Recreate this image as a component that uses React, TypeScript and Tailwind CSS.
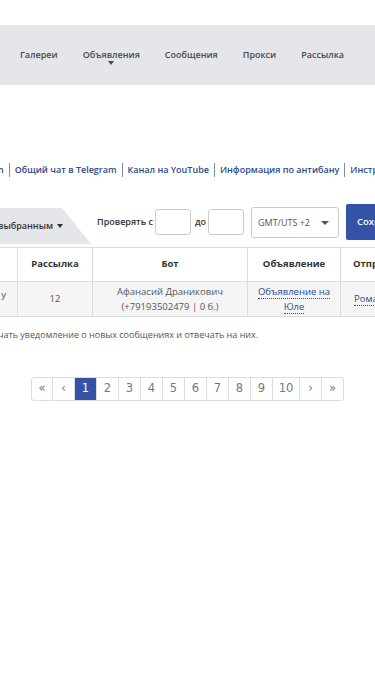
import React from 'react';

const navItems = ['Галереи', 'Объявления', 'Сообщения', 'Прокси', 'Рассылка'];
const links = ['Общий чат в Telegram', 'Канал на YouTube', 'Информация по антибану', 'Инструкция'];
const pages = ['«', '‹', '1', '2', '3', '4', '5', '6', '7', '8', '9', '10', '›', '»'];

const App: React.FC = () => {
  return (
    <div className="relative h-[700px] w-[375px] overflow-hidden bg-white font-['Open_Sans',sans-serif]">
      <div className="h-[25px]" />

      {/* top menu */}
      <nav className="flex h-[60px] items-center gap-[25px] bg-[#e5e6e9] pl-[20px] text-[9px] font-semibold text-[#4b4b4b]">
        {navItems.map((item) => (
          <div key={item} className="relative whitespace-nowrap">
            {item}
            {item === 'Объявления' && (
              <span className="absolute left-1/2 top-[13px] -translate-x-1/2 border-x-[3.5px] border-t-[4px] border-x-transparent border-t-[#4b4b4b]" />
            )}
          </div>
        ))}
      </nav>

      {/* useful links */}
      <div className="mt-[77px] flex h-[16px] items-center whitespace-nowrap text-[9px] font-semibold text-[#2d4a8a]">
        <span className="-ml-[2px]">n</span>
        {links.map((l) => (
          <React.Fragment key={l}>
            <span className="mx-[5px] h-[14px] border-l border-[#7f8aa8]" />
            <span>{l}</span>
          </React.Fragment>
        ))}
      </div>

      {/* filter row */}
      <div className="mt-[26px] flex h-[36px] items-start whitespace-nowrap">
        <div className="mt-[4px] flex h-[36px] w-[91px] shrink-0 items-center bg-[#e5e6e9] text-[9px] font-semibold text-[#333] [clip-path:polygon(0_0,62px_0,100%_100%,0_100%)]">
          <span className="-ml-[2px]">выбранным</span>
          <span className="ml-[4px] border-x-[3px] border-t-[4px] border-x-transparent border-t-[#333]" />
        </div>
        <div className="ml-[6px] mt-[5px] flex h-[26px] items-center text-[9px] font-semibold text-[#333]">
          Проверять с
          <input className="ml-[2px] h-[26px] w-[36px] rounded-[3px] border border-[#ccc] bg-white" />
          <span className="ml-[4px] mr-[2px]">до</span>
          <input className="h-[26px] w-[36px] rounded-[3px] border border-[#ccc] bg-white" />
        </div>
        <div className="ml-[7px] mt-[3px] flex h-[31px] w-[88px] shrink-0 items-center justify-between rounded-[3px] border border-[#ccc] bg-white pl-[6px] pr-[9px] text-[9px] text-[#555]">
          GMT/UTS +2
          <span className="border-x-[4px] border-t-[4px] border-x-transparent border-t-[#555]" />
        </div>
        <button className="ml-[7px] h-[36px] w-[80px] shrink-0 rounded-[2px] bg-[#3452a6] pl-[11px] text-left text-[9.5px] font-semibold text-white">
          Сохранить
        </button>
      </div>

      {/* table */}
      <table className="-ml-[63px] mt-[7px] w-[520px] table-fixed border-collapse text-[9.5px] text-[#555]">
        <thead>
          <tr className="h-[34px] bg-white">
            <th className="w-[80px] border border-[#dcdcdc] font-bold text-[#333]">Дата</th>
            <th className="w-[75px] border border-[#dcdcdc] font-bold text-[#333]">Рассылка</th>
            <th className="w-[155px] border border-[#dcdcdc] font-bold text-[#333]">Бот</th>
            <th className="w-[93px] border border-[#dcdcdc] font-bold text-[#333]">Объявление</th>
            <th className="w-[117px] border border-[#dcdcdc] pl-[12px] text-left font-bold text-[#333]">Отправитель</th>
          </tr>
        </thead>
        <tbody>
          <tr className="h-[35px] bg-[#f5f5f6]">
            <td className="whitespace-nowrap border border-[#dcdcdc] pb-[8px] pr-[11px] text-right leading-[14px]">
              Вчера у
            </td>
            <td className="border border-[#dcdcdc] text-center">12</td>
            <td className="border border-[#dcdcdc] text-center leading-[15px]">
              Афанасий Драникович
              <br />
              (+79193502479 | 0 б.)
            </td>
            <td className="border border-[#dcdcdc] text-center leading-[15px] text-[#2d4a8a]">
              <span className="border-b border-dotted border-[#2d4a8a]">Объявление на</span>
              <br />
              <span className="border-b border-dotted border-[#2d4a8a]">Юле</span>
            </td>
            <td className="border border-[#dcdcdc] pl-[13px] text-[#2d4a8a]">
              <span className="border-b border-dotted border-[#2d4a8a]">Роман</span>
            </td>
          </tr>
        </tbody>
      </table>

      <p className="-ml-[2px] mt-[12px] h-[12px] whitespace-nowrap text-[9px] leading-[12px] text-[#555]">
        чать уведомление о новых сообщениях и отвечать на них.
      </p>

      {/* pagination */}
      <div className="ml-[31px] mt-[36px] flex h-[24px] font-['DejaVu_Sans',sans-serif] text-[11.5px] text-[#777]">
        {pages.map((p, i) => (
          <div
            key={i}
            className={
              'flex h-[24px] items-center justify-center border-y border-r border-[#ddd] ' +
              (i === 0 ? 'rounded-l-[3px] border-l ' : '') +
              (i === pages.length - 1 ? 'rounded-r-[3px] ' : '') +
              (p === '10' ? 'w-[27px] ' : 'w-[22px] ') +
              (p === '1' ? 'border-[#3452a6] bg-[#3452a6] text-white' : 'bg-white')
            }
          >
            {p}
          </div>
        ))}
      </div>
    </div>
  );
};

export default App;
